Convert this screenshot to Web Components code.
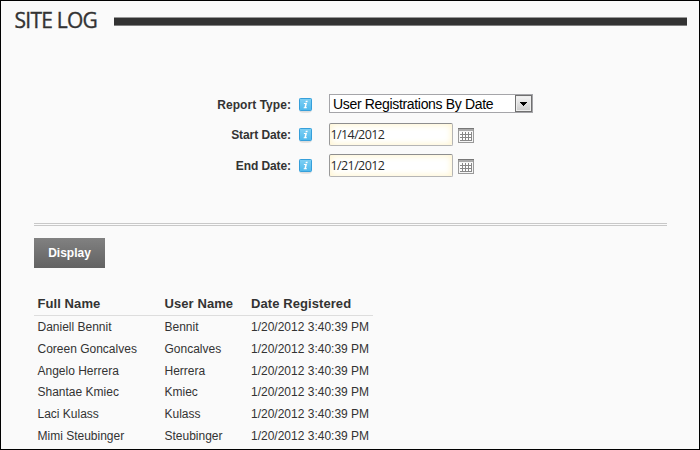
<!DOCTYPE html>
<html lang="en">
<head>
<meta charset="utf-8">
<title>Site Log</title>
<style>
html, body { margin: 0; height: 100%; }
body { font-family: "Liberation Sans", Arial, sans-serif; color: #333; overflow: hidden; }
</style>
</head>
<body>
<site-log></site-log>
<script>
const define = (name, html, setup) => {
  const tpl = document.createElement('template');
  tpl.innerHTML = html;
  customElements.define(name, class extends HTMLElement {
    constructor() {
      super();
      this.attachShadow({ mode: 'open' }).append(tpl.content.cloneNode(true));
    }
    connectedCallback() { if (setup) setup(this, this.shadowRoot); }
  });
};

define('page-title', `
<style>
:host { display: flex; align-items: center; height: 40px; padding: 0 12px 0 13.5px; }
h1 { margin: 0; width: 99.5px; font: 400 21px/38px "Open Sans", "Noto Sans", sans-serif; letter-spacing: -.75px; -webkit-text-stroke: .35px #333; white-space: nowrap; height: 40px; }
i { flex: 1; height: 7px; background: #333; border-top: 1px solid #999; border-bottom: 1px solid #808080; margin-top: 1px; }
</style>
<h1><slot></slot></h1><i></i>`);

define('info-icon', `
<style>:host { display: block; width: 14px; height: 16px; } svg { display: block; }</style>
<svg width="14" height="16" viewBox="0 0 14 16">
<defs><linearGradient id="g" x2="0" y2="1"><stop stop-color="#7fd0f4"/><stop offset="1" stop-color="#4fb9ec"/></linearGradient></defs>
<ellipse cx="6.5" cy="13.5" rx="6" ry="1.3" fill="#ddd"/>
<rect x=".5" y=".5" width="12" height="12" rx=".8" fill="url(#g)" stroke="#369fda"/>
<path d="M6.8 2.8h1.9l-.3 1.5H6.5zM5 5h3l-1 4.2h1l-.2 1H4.6l.2-1h.7l.7-3.1H4.8z" fill="#fff"/>
</svg>`);

define('calendar-icon', `
<style>:host { display: block; width: 16px; height: 15px; } svg { display: block; }</style>
<svg width="16" height="15" viewBox="0 0 16 15" shape-rendering="crispEdges">
<path d="M0 0h16v15H0z" fill="#999"/>
<path d="M0 0h16v1H0z" fill="#777"/>
<path d="M1 1h14v2H1z" fill="#aaa"/>
<path d="M1 3h14v11H1z" fill="#f6f6f6"/>
<path d="M2 4h12v9H2z" fill="#888"/>
<path d="M2 4h2v2H2zM2 7h2v2H2zM2 10h2v2H2zM5 4h2v2H5zM5 7h2v2H5zM5 10h2v2H5zM8 4h2v2H8zM8 7h2v2H8zM8 10h2v2H8zM11 4h2v2h-2zM11 7h2v2h-2zM11 10h2v2h-2z" fill="#fff"/>
</svg>`);

define('form-row', `
<style>
:host { display: grid; grid-template-columns: 291px 38px auto; align-items: center; height: 31px; }
label { text-align: right; font-weight: 700; font-size: 12px; letter-spacing: -.08px; }
info-icon { margin-left: 8px; margin-top: 3px; }
:host([first]) label { letter-spacing: .05px; margin-top: 2px; }
:host([first]) info-icon { margin-top: 5px; }
div { display: flex; align-items: center; }
</style>
<label></label><info-icon></info-icon><div><slot></slot></div>`,
(el, root) => root.querySelector('label').textContent = el.getAttribute('label'));

define('select-box', `
<style>
:host { display: flex; box-sizing: border-box; width: 204px; height: 19px; border: 1px solid #a5a5a9; background: #fff; color: #000; }
span { flex: 1; padding-left: 3px; font-size: 14px; line-height: 18px; letter-spacing: -.33px; white-space: nowrap; }
b { box-sizing: border-box; width: 17px; height: 17px; border: 1px solid #707070; background: linear-gradient(#f5f5f5, #ccc); box-shadow: inset 0 0 0 1px #eee; }
svg { display: block; }
</style>
<span><slot></slot></span><b><svg width="15" height="15"><path d="M4 6h7v1h-1v1H9v1H8v1H7V9H6V8H5V7H4z" shape-rendering="crispEdges"/></svg></b>`);

define('date-box', `
<style>
:host { display: flex; align-items: center; gap: 5px; }
span { box-sizing: border-box; width: 124px; height: 23px; padding-left: .5px; border: 1px solid #b5b5b5; border-top-color: #8e8e8e; border-left-color: #999; border-radius: 2px; background: #fff; box-shadow: inset 0 0 6px 1px #fff5cf; color: #2a2a2a; font: 400 12.5px/22px "Open Sans", "Noto Sans", sans-serif; letter-spacing: -.6px; }
calendar-icon { margin-top: 2px; }
</style>
<span><slot></slot></span><calendar-icon></calendar-icon>`);

define('action-button', `
<style>
:host { display: block; width: 71px; height: 30px; background: linear-gradient(#818181, #626262); color: #fff; font: 700 12px/30px "Liberation Sans", Arial, sans-serif; text-align: center; }
</style><slot></slot>`);

define('log-row', `
<style>
:host { display: grid; grid-template-columns: 127px 86.5px 1fr; padding-left: 3.5px; height: 21.8px; line-height: 22px; font-size: 12px; white-space: nowrap; }
:host([head]) { height: 23px; line-height: 24px; font-size: 13px; font-weight: 700; letter-spacing: .08px; border-bottom: 1px solid #ddd; }
</style><slot></slot>`);

define('log-table', `
<style>:host { display: block; width: 339px; }</style>
<log-row head><span>Full Name</span><span>User Name</span><span>Date Registered</span></log-row>`,
(el, root) => {
  if (root.querySelectorAll('log-row').length > 1) return;
  for (const [full, user] of [['Daniell Bennit', 'Bennit'], ['Coreen Goncalves', 'Goncalves'], ['Angelo Herrera', 'Herrera'], ['Shantae Kmiec', 'Kmiec'], ['Laci Kulass', 'Kulass'], ['Mimi Steubinger', 'Steubinger']]) {
    const row = document.createElement('log-row');
    for (const text of [full, user, '1/20/2012 3:40:39 PM']) {
      const cell = document.createElement('span');
      cell.textContent = text;
      row.append(cell);
    }
    root.append(row);
  }
});

define('site-log', `
<style>
:host { display: block; box-sizing: border-box; width: 700px; height: 450px; border: 1px solid #000; background: #fafafa; overflow: hidden; }
form { margin: 47px 0 0 -1px; }
.rule { height: 1px; margin: 42px 32px 12px 33px; border: solid #c8c8c8; border-width: 1px 0; }
action-button { margin-left: 33px; }
log-table { margin: 24px 0 0 33px; }
</style>
<page-title>SITE LOG</page-title>
<form>
<form-row first label="Report Type:"><select-box>User Registrations By Date</select-box></form-row>
<form-row label="Start Date:"><date-box>1/14/2012</date-box></form-row>
<form-row label="End Date:"><date-box>1/21/2012</date-box></form-row>
</form>
<div class="rule"></div>
<action-button>Display</action-button>
<log-table></log-table>`);
</script>
</body>
</html>
